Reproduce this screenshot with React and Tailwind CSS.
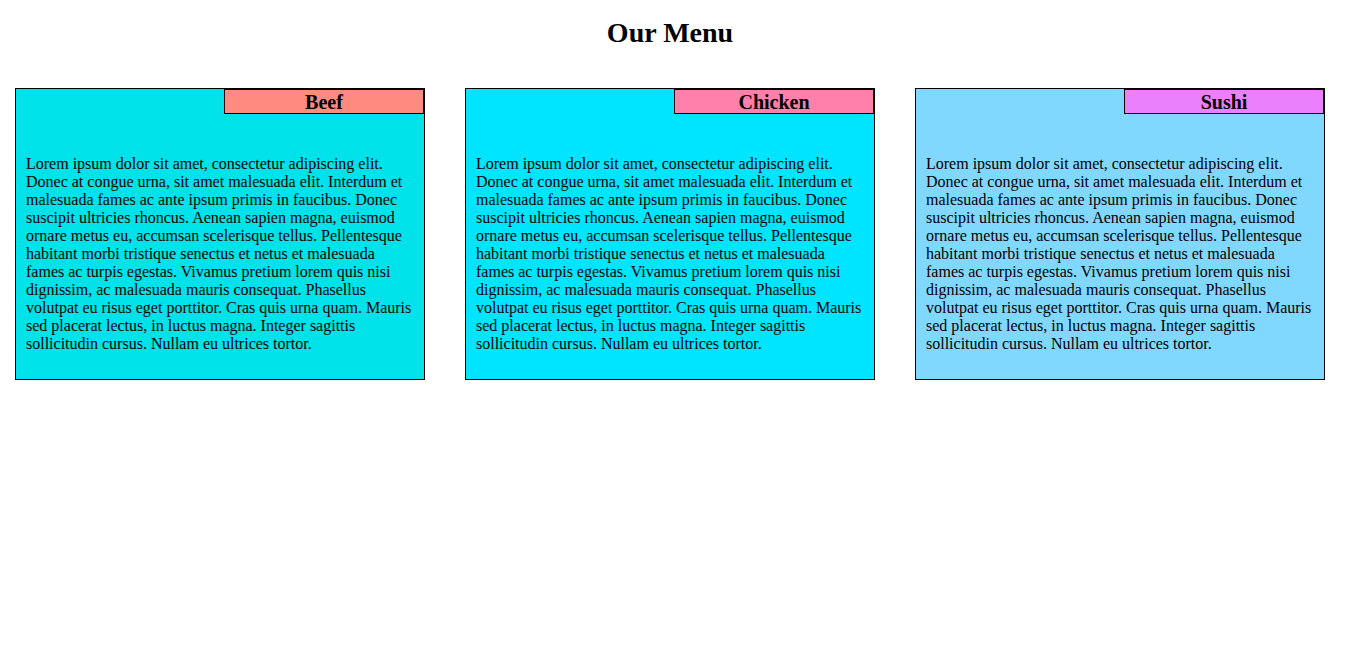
const lorem =
  "Lorem ipsum dolor sit amet, consectetur adipiscing elit. Donec at congue urna, sit amet malesuada elit. Interdum et malesuada fames ac ante ipsum primis in faucibus. Donec suscipit ultricies rhoncus. Aenean sapien magna, euismod ornare metus eu, accumsan scelerisque tellus. Pellentesque habitant morbi tristique senectus et netus et malesuada fames ac turpis egestas. Vivamus pretium lorem quis nisi dignissim, ac malesuada mauris consequat. Phasellus volutpat eu risus eget porttitor. Cras quis urna quam. Mauris sed placerat lectus, in luctus magna. Integer sagittis sollicitudin cursus. Nullam eu ultrices tortor.";

const items = [
  { name: "Beef", card: "bg-[#00E2EA]", label: "bg-[#FF8A80]" },
  { name: "Chicken", card: "bg-[#00E5FF]", label: "bg-[#FF80AB]" },
  { name: "Sushi", card: "bg-[#80D8FF]", label: "bg-[#EA80FC]" },
];

const MenuCard = ({ item }) => (
  <div className={`relative w-[410px] border border-black px-[10px] pt-[66px] pb-[26px] ${item.card}`}>
    {/* label sits in the top right corner */}
    <div
      className={`absolute top-0 right-0 w-[200px] h-[25px] border border-black flex items-center justify-center text-[20px] font-bold leading-none ${item.label}`}
    >
      {item.name}
    </div>
    <p className="text-[16px] leading-[18px]">{lorem}</p>
  </div>
);

export default function App() {
  return (
    <div className="min-h-screen bg-white text-black font-['Liberation_Serif','Times_New_Roman',serif]">
      <h1 className="text-center text-[28px] font-bold leading-[32px] pt-[17px] pr-[13px]">Our Menu</h1>
      <div className="flex gap-[40px] pl-[15px] mt-[39px]">
        {items.map((item) => (
          <MenuCard key={item.name} item={item} />
        ))}
      </div>
    </div>
  );
}
